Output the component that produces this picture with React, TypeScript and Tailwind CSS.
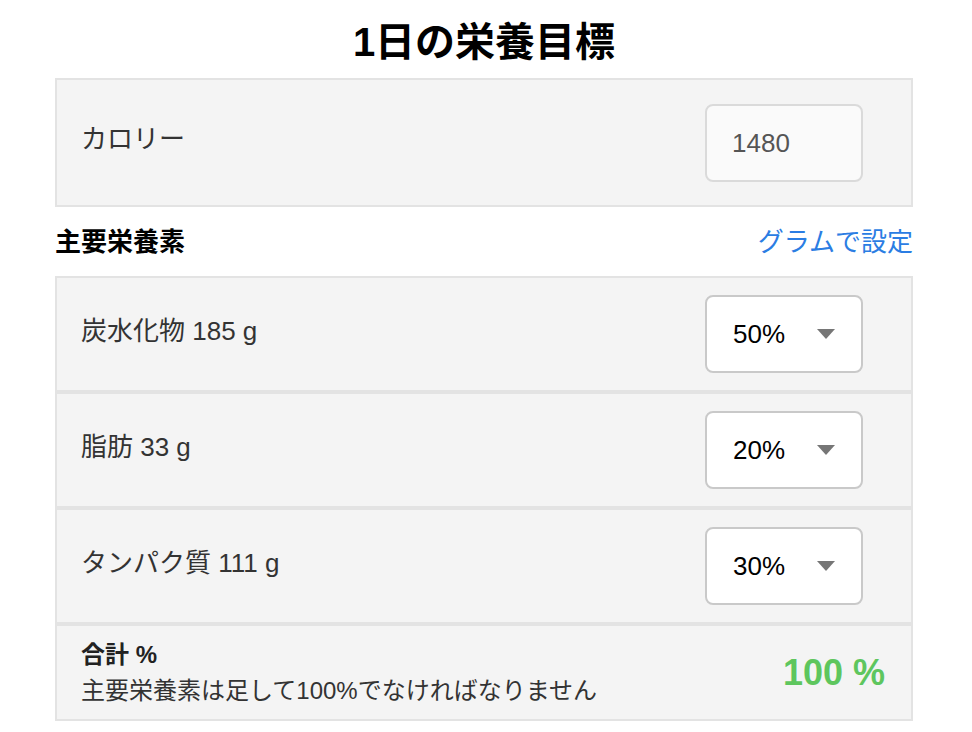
import React from 'react';

const font = "font-['Liberation_Sans','Noto_Sans_CJK_JP',sans-serif]";

type Macro = { label: string; percent: string };

const macros: Macro[] = [
  { label: '炭水化物 185 g', percent: '50%' },
  { label: '脂肪 33 g', percent: '20%' },
  { label: 'タンパク質 111 g', percent: '30%' },
];

const Caret: React.FC = () => (
  <svg width="18" height="10" viewBox="0 0 18 10" className="shrink-0">
    <path d="M0 0 L18 0 L9 10 Z" fill="#767676" />
  </svg>
);

const MacroRow: React.FC<{ macro: Macro }> = ({ macro }) => (
  <div className="flex h-[116px] items-center justify-between border-2 border-[#e3e3e3] bg-[#f4f4f4] pl-[24px] pr-[48px]">
    <p className="mb-[7px] text-[26px] leading-none text-[#333]">{macro.label}</p>
    <div className="flex h-[78px] w-[158px] items-center justify-between rounded-lg border-2 border-[#c9c9c9] bg-white pl-[26px] pr-[26px]">
      <span className="text-[26px] leading-none text-black">{macro.percent}</span>
      <Caret />
    </div>
  </div>
);

const App: React.FC = () => {
  return (
    <div className={`${font} min-h-[732px] w-[972px] bg-white`}>
      <div className="ml-[55px] w-[858px]">
        <h1 className="flex h-[78px] items-center justify-center pt-[6px] text-[40px] font-bold leading-none text-black">
          1日の栄養目標
        </h1>

        <div className="flex h-[129px] items-center justify-between border-2 border-[#e3e3e3] bg-[#f4f4f4] pl-[24px] pr-[48px]">
          <p className="mb-[7px] text-[26px] leading-none text-[#333]">カロリー</p>
          <div className="flex h-[78px] w-[158px] items-center rounded-lg border-2 border-[#dadada] bg-[#fafafa] pl-[25px]">
            <span className="text-[26px] leading-none text-[#555]">1480</span>
          </div>
        </div>

        <div className="flex h-[69px] items-center justify-between">
          <h2 className="text-[26px] font-bold leading-none text-black">主要栄養素</h2>
          <a className="text-[26px] leading-none text-[#2b7de3]">グラムで設定</a>
        </div>

        <div className="flex flex-col">
          {macros.map((macro, index) => (
            <MacroRow key={index} macro={macro} />
          ))}
          <div className="flex h-[97px] items-center justify-between border-2 border-[#e3e3e3] bg-[#f4f4f4] pl-[24px] pr-[26px]">
            <div className="flex flex-col gap-[12px]">
              <p className="text-[24px] font-bold leading-none text-[#222]">合計 %</p>
              <p className="text-[24px] leading-none text-[#333]">主要栄養素は足して100%でなければなりません</p>
            </div>
            <p className="text-[36px] font-bold leading-none text-[#5ec65e]">100 %</p>
          </div>
        </div>
      </div>
    </div>
  );
};

export default App;
